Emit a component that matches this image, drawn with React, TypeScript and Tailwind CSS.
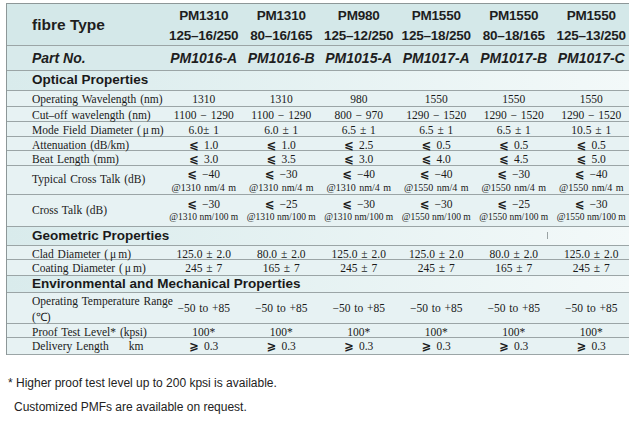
import React from "react";

const SERIF = "font-['Liberation_Serif','Times_New_Roman',serif]";
const SANS = "font-['Liberation_Sans',Arial,sans-serif]";
const GRID = "grid grid-cols-[158px_repeat(6,77.5px)]";
const LINE = "border-b border-[#9ba5a6]";
const DATA_BG = "bg-[#e7f2f3]";
const SECTION_BG = "bg-gradient-to-r from-[#d9ebec] to-[#f3f9f9]";

function Le({ ge }: { ge?: boolean }) {
  return (
    <span className="font-['DejaVu_Sans',sans-serif] font-bold text-[11.5px] mr-[5px]">
      {ge ? "⩾" : "⩽"}
    </span>
  );
}

type Cell = React.ReactNode;

function DataRow({
  h,
  label,
  vals,
}: {
  h: string;
  label: React.ReactNode;
  vals: Cell[];
}) {
  return (
    <div className={`${GRID} ${LINE} ${DATA_BG} ${h} ${SERIF} text-[11.5px] text-[#1a1a1a] [word-spacing:1px]`}>
      <div className="flex items-center pl-[25px] whitespace-nowrap">{label}</div>
      {vals.map((v, i) => (
        <div key={i} className="flex flex-col items-center justify-center whitespace-nowrap">
          {v}
        </div>
      ))}
    </div>
  );
}

function Section({ h, title, children }: { h: string; title: string; children?: React.ReactNode }) {
  return (
    <div className={`relative flex items-center ${LINE} ${SECTION_BG} ${h} pl-[25px] ${SANS} font-bold text-[13.5px] text-[#1a1a1a]`}>
      {title}
      {children}
    </div>
  );
}

function Two({ a, b, small }: { a: React.ReactNode; b: string; small?: boolean }) {
  return (
    <>
      <span className="leading-[14px]">{a}</span>
      <span className={small ? "text-[9.5px] leading-[13px] [word-spacing:0px]" : "text-[10px] leading-[13px]"}>{b}</span>
    </>
  );
}

export default function App() {
  const heads = [
    ["PM1310", "125–16/250"],
    ["PM1310", "80–16/165"],
    ["PM980", "125–12/250"],
    ["PM1550", "125–18/250"],
    ["PM1550", "80–18/165"],
    ["PM1550", "125–13/250"],
  ];
  const parts = ["PM1016-A", "PM1016-B", "PM1015-A", "PM1017-A", "PM1017-B", "PM1017-C"];
  const le = (s: string) => (
    <span>
      <Le />
      {s}
    </span>
  );
  const ge = (s: string) => (
    <span>
      <Le ge />
      {s}
    </span>
  );

  return (
    <div className="w-[629px] h-[422px] overflow-hidden bg-white">
      <div className="ml-[6px] mt-[3px] w-[623px] overflow-hidden border-l border-t border-[#8d9798]">
        {/* header */}
        <div className={`${GRID} ${LINE} h-[42px] bg-[#d4e8e9] ${SANS} font-bold text-[#1e1e1e]`}>
          <div className="flex items-center pl-[25px] text-[15.5px]">fibre Type</div>
          {heads.map((hd, i) => (
            <div key={i} className="flex flex-col items-center justify-center pt-[2px] text-[13.5px] tracking-[-0.2px] leading-[20px] whitespace-nowrap">
              <span>{hd[0]}</span>
              <span>{hd[1]}</span>
            </div>
          ))}
        </div>
        {/* part no */}
        <div className={`${GRID} ${LINE} h-[25px] bg-[#d8eaeb] ${SANS} font-bold italic text-[14px] text-[#1e1e1e]`}>
          <div className="flex items-center pl-[25px]">Part No.</div>
          {parts.map((p) => (
            <div key={p} className="flex items-center justify-center whitespace-nowrap">
              {p}
            </div>
          ))}
        </div>

        <Section h="h-[20px]" title="Optical Properties" />
        <DataRow h="h-[16px]" label="Operating Wavelength (nm)" vals={["1310", "1310", "980", "1550", "1550", "1550"]} />
        <DataRow
          h="h-[15px]"
          label="Cut–off wavelength (nm)"
          vals={["1100 − 1290", "1100 − 1290", "800 − 970", "1290 − 1520", "1290 − 1520", "1290 − 1520"]}
        />
        <DataRow
          h="h-[15px]"
          label={
            <span>
              Mode Field Diameter (<span className="mx-[2px]">μ</span>m)
            </span>
          }
          vals={["6.0± 1", "6.0 ± 1", "6.5 ± 1", "6.5 ± 1", "6.5 ± 1", "10.5 ± 1"]}
        />
        <DataRow h="h-[14px]" label="Attenuation (dB/km)" vals={["1.0", "1.0", "2.5", "0.5", "0.5", "0.5"].map(le)} />
        <DataRow h="h-[15px]" label="Beat Length (mm)" vals={["3.0", "3.5", "3.0", "4.0", "4.5", "5.0"].map(le)} />
        <DataRow
          h="h-[29px]"
          label="Typical Cross Talk (dB)"
          vals={[
            <Two a={le("−40")} b="@1310 nm/4 m" />,
            <Two a={le("−30")} b="@1310 nm/4 m" />,
            <Two a={le("−40")} b="@1310 nm/4 m" />,
            <Two a={le("−40")} b="@1550 nm/4 m" />,
            <Two a={le("−30")} b="@1550 nm/4 m" />,
            <Two a={le("−40")} b="@1550 nm/4 m" />,
          ]}
        />
        <DataRow
          h="h-[32px]"
          label="Cross Talk (dB)"
          vals={[
            <Two small a={le("−30")} b="@1310 nm/100 m" />,
            <Two small a={le("−25")} b="@1310 nm/100 m" />,
            <Two small a={le("−30")} b="@1310 nm/100 m" />,
            <Two small a={le("−30")} b="@1550 nm/100 m" />,
            <Two small a={le("−25")} b="@1550 nm/100 m" />,
            <Two small a={le("−30")} b="@1550 nm/100 m" />,
          ]}
        />

        <Section h="h-[19px]" title="Geometric Properties">
          <span className="absolute left-[540px] top-[5px] h-[7px] w-px bg-[#9aa3a4]" />
        </Section>
        <DataRow
          h="h-[14px]"
          label={
            <span>
              Clad Diameter (<span className="mx-[2px]">μ</span>m)
            </span>
          }
          vals={["125.0 ± 2.0", "80.0 ± 2.0", "125.0 ± 2.0", "125.0 ± 2.0", "80.0 ± 2.0", "125.0 ± 2.0"]}
        />
        <DataRow
          h="h-[16px]"
          label={
            <span>
              Coating Diameter (<span className="mx-[2px]">μ</span>m)
            </span>
          }
          vals={["245 ± 7", "165 ± 7", "245 ± 7", "245 ± 7", "165 ± 7", "245 ± 7"]}
        />

        <Section h="h-[17px]" title="Environmental and Mechanical Properties" />
        <DataRow
          h="h-[31px]"
          label={
            <span className="leading-[16px]">
              Operating Temperature Range
              <br />
              (℃)
            </span>
          }
          vals={Array.from({ length: 6 }, () => "−50 to +85")}
        />
        <DataRow h="h-[14px]" label="Proof Test Level* (kpsi)" vals={Array.from({ length: 6 }, () => "100*")} />
        <DataRow
          h="h-[17px]"
          label={
            <span>
              Delivery Length<span className="ml-[20px]">km</span>
            </span>
          }
          vals={Array.from({ length: 6 }, () => ge("0.3"))}
        />
      </div>

      <div className={`mt-[16px] ${SANS} text-[12px] leading-[24px] text-[#222]`}>
        <div className="pl-[8px]">* Higher proof test level up to 200 kpsi is available.</div>
        <div className="pl-[14px]">Customized PMFs are available on request.</div>
      </div>
    </div>
  );
}
